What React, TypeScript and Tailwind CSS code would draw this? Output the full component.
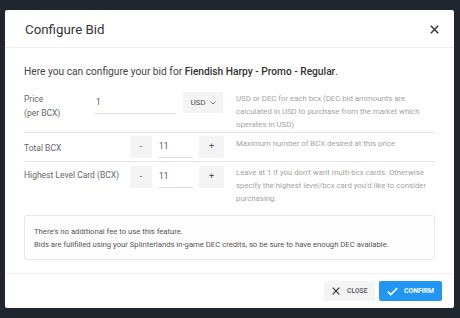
import React from "react";

function Btn({ children, className = "" }: { children: React.ReactNode; className?: string }) {
  return (
    <div className={"flex items-center justify-center bg-[#f4f4f4] text-[#555] text-[9px] " + className}>
      {children}
    </div>
  );
}

export default function App() {
  return (
    <div className="w-[460px] h-[318px] bg-[#20262d] pt-[10px] pl-[5px]" style={{ fontFamily: "Roboto, 'Open Sans', sans-serif" }}>
      <div className="w-[449px] h-[298px] bg-white rounded-[2px] flex flex-col">
        {/* header */}
        <div className="h-[38px] border-b border-[#eeeeee] flex items-center justify-between pl-[20px] pr-[15px] shrink-0">
          <div className="text-[13.3px] text-[#333] leading-none mt-[2px]">Configure Bid</div>
          <svg width="9" height="9" viewBox="0 0 9 9" className="mt-[2px]">
            <path d="M0.8 0.8 L8.2 8.2 M8.2 0.8 L0.8 8.2" stroke="#333" strokeWidth="1.4" />
          </svg>
        </div>
        {/* body */}
        <div className="px-[19px] flex-1">
          <div className="mt-[17px] text-[10.2px] text-[#444] leading-[13px]">
            Here you can configure your bid for <span className="font-medium text-[#333]">Fiendish Harpy - Promo - Regular</span>.
          </div>
          {/* row 1 */}
          <div className="mt-[11px] h-[44px] border-b border-[#e6e6e6] flex items-start pt-[3px]">
            <div className="w-[71px] text-[8.5px] text-[#666] leading-[14px]">
              <div>Price</div>
              <div>(per BCX)</div>
            </div>
            <div className="w-[81px] h-[22px] border-b border-[#ddd] flex items-end pb-[5px] text-[8.3px] text-[#555] pl-[1px]">1</div>
            <Btn className="ml-[7px] w-[40px] h-[21px] gap-[4px]">
              <span className="text-[8px]">USD</span>
              <svg width="6" height="4" viewBox="0 0 6 4"><path d="M0.5 0.5 L3 3 L5.5 0.5" stroke="#666" fill="none" strokeWidth="0.9" /></svg>
            </Btn>
            <div className="ml-[13px] w-[192px] text-[7.8px] leading-[13px] text-[#a3a3a3]">
              USD or DEC for each bcx (DEC bid ammounts are calculated in USD to purchase from the market which operates in USD)
            </div>
          </div>
          {/* row 2 */}
          <div className="h-[29px] border-b border-[#e6e6e6] flex items-start pt-[2px]">
            <div className="w-[106px] text-[8.5px] text-[#666] leading-[14px] pt-[6px]">Total BCX</div>
            <Btn className="w-[22px] h-[22px] mt-[1px]">-</Btn>
            <div className="ml-[7px] w-[34px] h-[22px] mt-[1px] border-b border-[#ddd] flex items-center text-[8.3px] text-[#555]">11</div>
            <Btn className="ml-[6px] w-[25px] h-[22px] mt-[1px]">+</Btn>
            <div className="ml-[12px] w-[192px] text-[7.8px] leading-[13px] text-[#a3a3a3] pt-[2px]">
              Maximum number of BCX desired at this price
            </div>
          </div>
          {/* row 3 */}
          <div className="flex items-start pt-[3px]">
            <div className="w-[106px] text-[8.5px] text-[#666] leading-[14px] pt-[3px]">Highest Level Card (BCX)</div>
            <Btn className="w-[22px] h-[22px] mt-[1px]">-</Btn>
            <div className="ml-[7px] w-[34px] h-[22px] mt-[1px] border-b border-[#ddd] flex items-center text-[8.3px] text-[#555]">11</div>
            <Btn className="ml-[6px] w-[25px] h-[22px] mt-[1px]">+</Btn>
            <div className="ml-[12px] w-[192px] text-[7.8px] leading-[13px] text-[#a3a3a3] pt-[1px]">
              Leave at 1 if you don't want multi-bcx cards. Otherwise specify the highest level/bcx card you'd like to consider purchasing.
            </div>
          </div>
          {/* info */}
          <div className="mt-[10px] h-[45px] border border-[#e8e8e8] rounded-[3px] bg-[#fdfdfd] px-[9px] pt-[9px] text-[7.7px] leading-[13px] text-[#555]">
            <div>There's no additional fee to use this feature.</div>
            <div>Bids are fullfilled using your Splinterlands in-game DEC credits, so be sure to have enough DEC available.</div>
          </div>
        </div>
        {/* footer */}
        <div className="h-[35px] border-t border-[#eeeeee] flex items-start justify-end pt-[7px] pr-[12px] gap-[4px] shrink-0">
          <div className="w-[51px] h-[20px] bg-[#f4f4f4] rounded-[2px] flex items-center gap-[7px] pl-[8px] text-[6.8px] font-medium text-[#555]">
            <svg width="8" height="8" viewBox="0 0 8 8"><path d="M0.7 0.7 L7.3 7.3 M7.3 0.7 L0.7 7.3" stroke="#333" strokeWidth="1.2" /></svg>
            CLOSE
          </div>
          <div className="w-[63px] h-[20px] bg-[#2196f3] rounded-[2px] flex items-center gap-[6px] pl-[8px] text-[6.8px] font-bold text-white">
            <svg width="11" height="9" viewBox="0 0 11 9"><path d="M0.8 4.6 L3.8 7.6 L10.2 1" stroke="#fff" strokeWidth="1.6" fill="none" /></svg>
            CONFIRM
          </div>
        </div>
      </div>
    </div>
  );
}
